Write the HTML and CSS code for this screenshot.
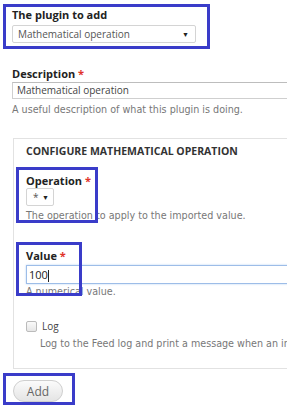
FILE: index.html
```html
<!DOCTYPE html>
<html lang="en">
<head>
  <meta charset="UTF-8">
  <meta name="viewport" content="width=device-width, initial-scale=1.0">
  <title>Add plugin</title>
  <link rel="stylesheet" href="styles.css">
</head>
<body>
  <form class="plugin-form">
    <div class="form-item plugin-select">
      <label class="form-label">The plugin to add</label>
      <div class="select wide">
        <span>Mathematical operation</span>
        <span class="arrow">&#9660;</span>
      </div>
    </div>

    <div class="form-item description">
      <label class="form-label">Description <span class="required">*</span></label>
      <div class="text-input">Mathematical operation</div>
      <div class="help">A useful description of what this plugin is doing.</div>
    </div>

    <fieldset class="config">
      <div class="legend">CONFIGURE MATHEMATICAL OPERATION</div>

      <div class="form-item operation">
        <label class="form-label">Operation <span class="required">*</span></label>
        <div class="select small">
          <span>*</span>
          <span class="arrow">&#9660;</span>
        </div>
        <div class="help">The operation to apply to the imported value.</div>
      </div>

      <div class="form-item value">
        <label class="form-label">Value <span class="required">*</span></label>
        <div class="text-input focused">100<span class="caret"></span></div>
        <div class="help">A numerical value.</div>
      </div>

      <div class="form-item log">
        <div class="checkbox-row">
          <span class="checkbox"></span>
          <span class="checkbox-label">Log</span>
        </div>
        <div class="help indented">Log to the Feed log and print a message when an invalid value is found.</div>
      </div>
    </fieldset>

    <div class="actions">
      <button type="button" class="button">Add</button>
    </div>
  </form>

  <!-- annotation boxes drawn over the screenshot -->
  <div class="mark mark-plugin"></div>
  <div class="mark mark-operation"></div>
  <div class="mark mark-value"></div>
  <div class="mark mark-add"></div>
</body>
</html>
```

FILE: styles.css
```css
html, body {
  margin: 0;
  padding: 0;
  background: #fff;
  overflow: hidden;
}
body {
  font-family: "DejaVu Sans", Verdana, sans-serif;
  color: #333;
  width: 287px;
  height: 407px;
  position: relative;
}
.plugin-form {
  padding: 9px 0 0 12px;
}
.form-label {
  display: block;
  font-family: "Open Sans", sans-serif;
  font-weight: 700;
  font-size: 11px;
  line-height: 12px;
  color: #222;
  margin-bottom: 4px;
}
.required {
  color: #e0322a;
}
.select {
  display: flex;
  align-items: center;
  justify-content: space-between;
  box-sizing: border-box;
  height: 18px;
  border: 1px solid #d4d4d4;
  border-radius: 2px;
  background: #fff;
  font-family: "Open Sans", sans-serif;
  font-size: 10px;
  color: #555;
  padding: 0 6px 0 5px;
}
.select.wide {
  width: 184px;
}
.select.small {
  width: 28px;
  padding: 0 4px 0 6px;
}
.arrow {
  font-size: 7px;
  color: #222;
}
.description {
  margin-top: 25px;
}
.description .form-label {
  margin-bottom: 2px;
}
.text-input {
  box-sizing: border-box;
  height: 17px;
  width: 290px;
  border: 1px solid #cfcfcf;
  border-top-color: #bdbdbd;
  font-family: "Open Sans", sans-serif;
  font-size: 10px;
  line-height: 15px;
  color: #444;
  padding: 0 4px;
}
.help {
  font-size: 9.6px;
  color: #777;
  margin-top: 5px;
  line-height: 12px;
  white-space: nowrap;
}
.config {
  margin: 22px 0 0 1px;
  padding: 6px 0 0 12px;
  border: 1px solid #e2e2e2;
  border-right: none;
  width: 300px;
  box-sizing: border-box;
  height: 231px;
}
.legend {
  font-family: "Open Sans", sans-serif;
  font-weight: 700;
  font-size: 10.5px;
  color: #333;
  line-height: 12px;
}
.operation {
  margin-top: 18px;
}
.operation .form-label {
  margin-bottom: 1px;
}
.operation .help {
  margin-top: 4px;
}
.value {
  margin-top: 28px;
}
.value .form-label {
  margin-bottom: 3px;
}
.value .text-input {
  height: 19px;
  border: 1px solid #9dbde8;
  box-shadow: 0 0 2px #b9d3f3;
  font-size: 11px;
  line-height: 17px;
  color: #222;
  padding-left: 2px;
}
.value .help {
  margin-top: 2px;
}
.caret {
  display: inline-block;
  width: 1px;
  height: 12px;
  background: #222;
  vertical-align: middle;
}
.log {
  margin-top: 22px;
}
.checkbox-row {
  display: flex;
  align-items: center;
  gap: 5px;
  height: 12px;
}
.checkbox {
  width: 9px;
  height: 9px;
  border: 1px solid #bbb;
  border-radius: 2px;
  background: linear-gradient(#fafafa, #e6e6e6);
}
.checkbox-label {
  font-family: "Open Sans", sans-serif;
  font-size: 10px;
  color: #444;
}
.help.indented {
  margin-left: 14px;
  margin-top: 6px;
}
.actions {
  margin-top: 11px;
  padding-left: 1px;
}
.button {
  display: block;
  width: 50px;
  height: 22px;
  margin: 0;
  border: 1px solid #cfcfcf;
  border-radius: 11px;
  background: linear-gradient(#fbfbfb, #e4e4e4);
  font-family: "Open Sans", sans-serif;
  font-size: 12px;
  color: #666;
  padding: 0;
}
.mark {
  position: absolute;
  border: 3px solid #3a3cc9;
  box-sizing: border-box;
}
.mark-plugin {
  left: 3px;
  top: 4px;
  width: 207px;
  height: 45px;
}
.mark-operation {
  left: 16px;
  top: 167px;
  width: 82px;
  height: 56px;
}
.mark-value {
  left: 16px;
  top: 242px;
  width: 66px;
  height: 54px;
}
.mark-add {
  left: 3px;
  top: 373px;
  width: 72px;
  height: 32px;
}
```
